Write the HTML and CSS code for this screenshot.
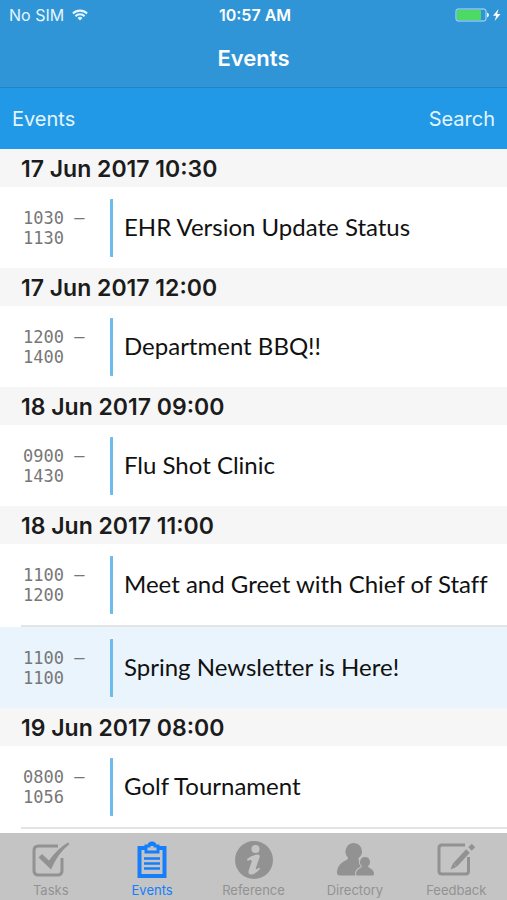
FILE: index.html
```html
<!DOCTYPE html>
<html lang="en">

<head>
  <meta charset="UTF-8">
  <meta name="viewport" content="width=device-width, initial-scale=1.0">
  <title>Events</title>
  <link rel="stylesheet" href="styles.css">
</head>

<body>
  <header class="top">
    <div class="status">
      <div class="carrier">
        <span>No SIM</span>
        <svg width="16" height="12" viewBox="0 0 18 13" fill="none" stroke="currentColor" stroke-width="2.300">
          <path d="M1 4.8a11.5 11.5 0 0 1 16 0" />
          <path d="M3.8 7.8a7.4 7.4 0 0 1 10.4 0" />
          <path d="M9 12.6 6.2 9.8a4 4 0 0 1 5.6 0z" fill="currentColor" stroke="none" />
        </svg>
      </div>
      <span class="clock">10:57 AM</span>
      <div class="battery">
        <svg width="46" height="14" viewBox="0 0 46 14">
          <rect x="1" y="1" width="30" height="12" rx="2" fill="none" stroke="#b9dff5" />
          <rect x="2" y="2" width="24" height="10" rx="1" fill="#4cd964" />
          <path d="M32 4.5q2 .8 2 2.5t-2 2.500z" fill="#e4f5fd" />
          <path d="M43.500 1 38 7.800h3.200L39.700 13 45.500 6h-3.300z" fill="#fff" />
        </svg>
      </div>
    </div>
    <h1>Events</h1>
  </header>

  <div class="toolbar">
    <button>Events</button>
    <button>Search</button>
  </div>

  <main>
    <section>
      <h2>17 Jun 2017 10:30</h2>
      <ul>
        <li><time>1030 – 1130</time><span class="event">EHR Version Update Status</span></li>
      </ul>
    </section>
    <section>
      <h2>17 Jun 2017 12:00</h2>
      <ul>
        <li><time>1200 – 1400</time><span class="event">Department BBQ!!</span></li>
      </ul>
    </section>
    <section>
      <h2>18 Jun 2017 09:00</h2>
      <ul>
        <li><time>0900 – 1430</time><span class="event">Flu Shot Clinic</span></li>
      </ul>
    </section>
    <section>
      <h2>18 Jun 2017 11:00</h2>
      <ul>
        <li><time>1100 – 1200</time><span class="event">Meet and Greet with Chief of Staff</span></li>
        <li class="divider"></li>
        <li class="selected"><time>1100 – 1100</time><span class="event">Spring Newsletter is Here!</span></li>
      </ul>
    </section>
    <section>
      <h2>19 Jun 2017 08:00</h2>
      <ul>
        <li><time>0800 – 1056</time><span class="event">Golf Tournament</span></li>
        <li class="divider"></li>
      </ul>
    </section>
  </main>

  <nav class="tabs">
    <button>
      <svg width="40" height="40" viewBox="0 0 40 40" fill="none" stroke="currentColor">
        <path d="M27 6H7.500Q3 6 3 10.500v20Q3 35 7.500 35h19q4.500 0 4.500-4.500V18" stroke-width="3" />
        <path d="M7.500 17.500 11 14l7 6.500Q26 9 37 2.500l1.500 1.500Q27 13 20 29.500z" fill="currentColor" stroke="none" />
      </svg>
      Tasks
    </button>
    <button class="active">
      <svg width="40" height="40" viewBox="0 0 40 40" fill="none" stroke="currentColor">
        <path d="M13 8H7.500v28h25V8H27" stroke-width="4" />
        <path d="M14 6h3q0-3 3-3t3 3h3v6H14z" stroke-width="3" />
        <path d="M16 6h8V4l-4-2-4 2z" fill="currentColor" stroke="none" />
        <path d="M12 18.500h16M12 23.500h16M12 28.500h16" stroke-width="2.500" />
      </svg>
      Events
    </button>
    <button>
      <svg width="40" height="40" viewBox="0 0 40 40">
        <circle cx="20" cy="20" r="19" fill="currentColor" />
        <circle cx="21.500" cy="9" r="4" fill="#c4c4c4" />
        <path d="M13 19q5-4.500 11-4.500 2.500 0 1.500 3l-3.800 11q-.5 2 3.800-1l.5 1.500Q21 34.500 17 34.500q-3.500 0-2.300-4l3-9q.7-2.500-4.200-.7z" fill="#c4c4c4" />
      </svg>
      Reference
    </button>
    <button>
      <svg width="40" height="40" viewBox="0 0 40 40">
        <g fill="currentColor">
          <path d="M18.500 3a8.500 8.500 0 0 1 5 15.300q-.5 1.500 1 2.700 3 2 4 6-5.500 2-7.500 8.500H5q-3.500 0-3-4 .6-7 7.500-10.500 4-1.700 3.500-3.500A8.500 8.500 0 0 1 18.500 3z" />
          <path d="M30 17a5 5 0 0 1 3 9q0 1.500 2 2.200 4 2 4 5.800 0 1.500-1.500 1.500h-15Q21 35.500 21 34q0-3.800 4-5.800 2-.7 2-2.200a5 5 0 0 1 3-9z" stroke="#c4c4c4" stroke-width="2" paint-order="stroke" />
        </g>
      </svg>
      Directory
    </button>
    <button>
      <svg width="40" height="40" viewBox="0 0 40 40" fill="none" stroke="currentColor">
        <path d="M29 5H6Q3 5 3 8v23q0 3 3 3h23.500q3 0 3-3V17" stroke-width="3" />
        <path d="M14.500 29.500 17 23l3.500 4z" fill="currentColor" stroke="none" />
        <path d="M19 25 32 11" stroke-width="5" />
        <path d="M34 9 37.500 5.500" stroke-width="5" />
      </svg>
      Feedback
    </button>
  </nav>
</body>

</html>
```

FILE: styles.css
```css
* {
  box-sizing: border-box;
}

body {
  margin: 0;
  min-height: 100vh;
  display: flex;
  flex-direction: column;
  background-color: white;
  font-family: Inter, "Liberation Sans", sans-serif;
}

h1,
h2,
ul {
  margin: 0;
  padding: 0;
}

button {
  border: 0;
  padding: 0;
  background: none;
  font-family: inherit;
  cursor: pointer;
}

svg {
  display: block;
}

.top {
  background-color: #3095d7;
  border-bottom: 1px solid #2583c4;
  color: white;
}

.status {
  display: grid;
  grid-template-columns: 1fr auto 1fr;
  align-items: center;
  height: 30px;
  padding: 0 6px 0 9px;
  font-size: 16px;
}

.carrier {
  display: flex;
  align-items: center;
  gap: 8px;
  color: #e4f5fd;
}

.clock {
  font-weight: 600;
}

.battery {
  justify-self: end;
}

h1 {
  height: 57px;
  line-height: 56px;
  font-size: 22px;
  font-weight: 600;
  text-align: center;
}

.toolbar {
  display: flex;
  justify-content: space-between;
  height: 61px;
  padding: 0 12px;
  background-color: #2199e7;
}

.toolbar button {
  color: #e4f5fd;
  font-size: 20px;
}

main {
  flex: 1;
}

h2 {
  height: 38px;
  padding-left: 21px;
  background-color: #f6f6f6;
  color: #1c1c1c;
  font-size: 23px;
  font-weight: 600;
  line-height: 40px;
}

ul {
  list-style: none;
}

li {
  display: flex;
  align-items: center;
  height: 81px;
  padding-left: 23px;
}

.selected {
  background-color: #e9f4fc;
}

.divider {
  height: 2px;
  margin-left: 21px;
  background-color: #e4e4e6;
}

time {
  width: 87px;
  padding-right: 16px;
  color: #777;
  font-family: "DejaVu Sans Mono", monospace;
  font-size: 17px;
  line-height: 20px;
}

.event {
  flex: 1;
  padding: 0 0 2px 11px;
  border-left: 3px solid #6cbbec;
  border-radius: 1px;
  color: #111;
  font-family: Lato, sans-serif;
  font-size: 24px;
  font-variant-ligatures: none;
  line-height: 56px;
}

.tabs {
  display: flex;
  height: 67px;
  background-color: #c4c4c4;
}

.tabs button {
  flex: 1;
  display: flex;
  flex-direction: column;
  align-items: center;
  padding-top: 7px;
  color: #929292;
  font-size: 13px;
  line-height: 20px;
}

.tabs .active {
  color: #147efb;
}
```
